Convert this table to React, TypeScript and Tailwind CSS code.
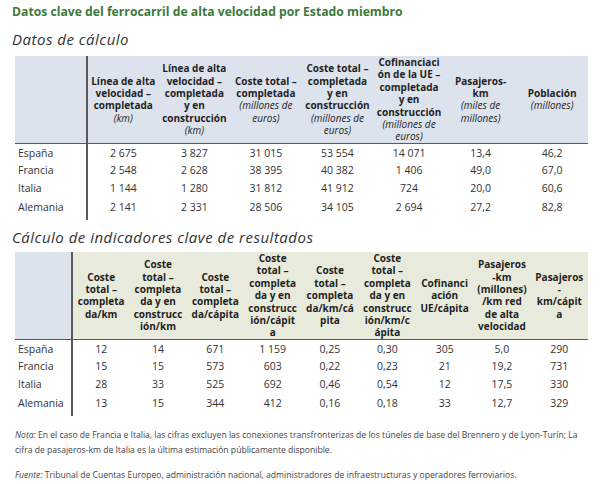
const t1Head: string[][] = [
  ['Línea de alta', 'velocidad –', 'completada', '*(km)'],
  ['Línea de alta', 'velocidad –', 'completada', 'y en', 'construcción', '*(km)'],
  ['Coste total –', 'completada', '*(millones de', '*euros)'],
  ['Coste total –', 'completada', 'y en', 'construcción', '*(millones de', '*euros)'],
  ['Cofinanciaci', 'ón de la UE –', 'completada', 'y en', 'construcción', '*(millones de', '*euros)'],
  ['Pasajeros-', 'km', '*(miles de', '*millones)'],
  ['Población', '*(millones)'],
];

const t1Rows: [string, string[]][] = [
  ['España', ['2 675', '3 827', '31 015', '53 554', '14 071', '13,4', '46,2']],
  ['Francia', ['2 548', '2 628', '38 395', '40 382', '1 406', '49,0', '67,0']],
  ['Italia', ['1 144', '1 280', '31 812', '41 912', '724', '20,0', '60,6']],
  ['Alemania', ['2 141', '2 331', '28 506', '34 105', '2 694', '27,2', '82,8']],
];

const t2Head: string[][] = [
  ['Coste', 'total –', 'completa', 'da/km'],
  ['Coste', 'total –', 'completa', 'da y en', 'construcc', 'ión/km'],
  ['Coste', 'total –', 'completa', 'da/cápita'],
  ['Coste', 'total –', 'completa', 'da y en', 'construcc', 'ión/cápit', 'a'],
  ['Coste', 'total –', 'completa', 'da/km/cá', 'pita'],
  ['Coste', 'total –', 'completa', 'da y en', 'construcc', 'ión/km/c', 'ápita'],
  ['Cofinanci', 'ación', 'UE/cápita'],
  ['Pasajeros', '-km', '(millones)', '/km red', 'de alta', 'velocidad'],
  ['Pasajeros', '-', 'km/cápit', 'a'],
];

const t2Rows: [string, string[]][] = [
  ['España', ['12', '14', '671', '1 159', '0,25', '0,30', '305', '5,0', '290']],
  ['Francia', ['15', '15', '573', '603', '0,22', '0,23', '21', '19,2', '731']],
  ['Italia', ['28', '33', '525', '692', '0,46', '0,54', '12', '17,5', '330']],
  ['Alemania', ['13', '15', '344', '412', '0,16', '0,18', '33', '12,7', '329']],
];

function HeadLines({ lines }: { lines: string[] }) {
  return (
    <>
      {lines.map((l, i) =>
        l.startsWith('*') ? (
          <div key={i} className="italic font-normal">{l.slice(1)}</div>
        ) : (
          <div key={i}>{l}</div>
        )
      )}
    </>
  );
}

function DataTable({
  head,
  rows,
  firstWidth,
  headBg,
}: {
  head: string[][];
  rows: [string, string[]][];
  firstWidth: string;
  headBg: string;
}) {
  return (
    <table className="table-fixed border-collapse w-[573px] ml-[3px]">
      <colgroup>
        <col className={firstWidth} />
        {head.map((_, i) => (
          <col key={i} />
        ))}
      </colgroup>
      <thead>
        <tr className="h-[87px]">
          <th className="bg-[#dde3ed] border-r-2 border-b-[1.5px] border-[#5a5a5a] p-0"></th>
          {head.map((lines, i) => (
            <th
              key={i}
              className={`${headBg} border-b-[1.5px] border-[#5a5a5a] p-0 align-middle text-center text-[10px] leading-[12.4px] font-bold text-[#1f1f1f] whitespace-nowrap`}
            >
              <HeadLines lines={lines} />
            </th>
          ))}
        </tr>
      </thead>
      <tbody>
        {rows.map(([name, vals], r) => (
          <tr key={name} className="h-[18.4px] text-[10.5px] text-[#333]">
            <td className={`border-r-2 border-[#5a5a5a] pl-[3px] p-0 ${r === 0 ? 'pt-[2px]' : ''}`}>{name}</td>
            {vals.map((v, i) => (
              <td key={i} className={`text-center p-0 ${r === 0 ? 'pt-[2px]' : ''}`}>
                {v}
              </td>
            ))}
          </tr>
        ))}
        <tr className="h-[3px]">
          <td className="border-r-2 border-[#5a5a5a] p-0"></td>
          <td colSpan={head.length} className="p-0"></td>
        </tr>
      </tbody>
    </table>
  );
}

export default function App() {
  return (
    <div className="w-[600px] h-[484px] bg-white px-[12px] pt-[3px] font-['Open_Sans',sans-serif] text-[#333] overflow-hidden">
      <h1 className="text-[12.2px] leading-[18px] font-bold text-[#3c7a3c]">
        Datos clave del ferrocarril de alta velocidad por Estado miembro
      </h1>
      <h2 className="mt-[8px] text-[15px] leading-[20px] italic tracking-[0.5px] text-[#333]">
        Datos de cálculo
      </h2>
      <div className="mt-[7px]">
        <DataTable head={t1Head} rows={t1Rows} firstWidth="w-[72px]" headBg="bg-[#dde3ed]" />
      </div>
      <h2 className="mt-[7px] text-[15px] leading-[20px] italic tracking-[0.5px] text-[#333]">
        Cálculo de indicadores clave de resultados
      </h2>
      <div className="mt-[5px]">
        <DataTable head={t2Head} rows={t2Rows} firstWidth="w-[57px]" headBg="bg-[#e8ebdc]" />
      </div>
      <div className="mt-[12px] ml-[3px] text-[8.6px] leading-[15px] text-[#444]">
        <p>
          <span className="italic">Nota:</span> En el caso de Francia e Italia, las cifras excluyen las conexiones
          transfronterizas de los túneles de base del Brennero y de Lyon-Turín; La cifra de pasajeros-km de Italia es
          la última estimación públicamente disponible.
        </p>
        <p className="mt-[10px]">
          <span className="italic">Fuente:</span> Tribunal de Cuentas Europeo, administración nacional,
          administradores de infraestructuras y operadores ferroviarios.
        </p>
      </div>
    </div>
  );
}
